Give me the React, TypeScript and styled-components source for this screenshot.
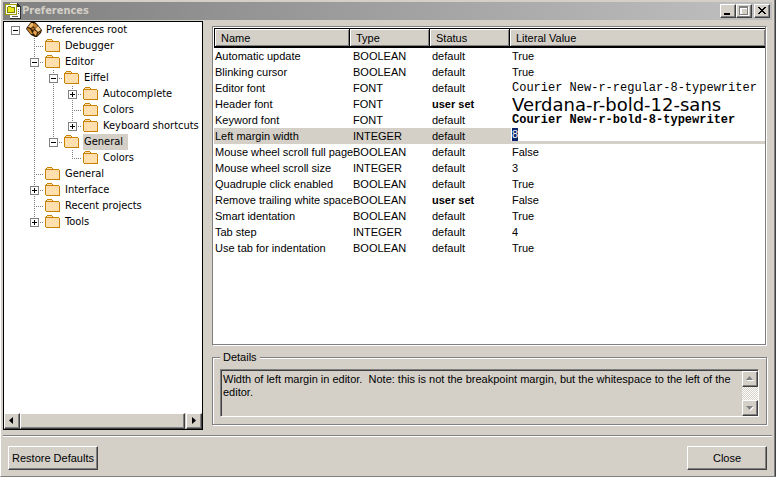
import React, { useState } from "react";
import styled, { createGlobalStyle, css } from "styled-components";

const face = "#d4d0c8";
const shade = "#808080";
const dark = "#404040";
const sans = `"Liberation Sans", Arial, sans-serif`;
const tahoma = `"DejaVu Sans Condensed", "DejaVu Sans", sans-serif`;
const mono = `"Liberation Mono", monospace`;

const GlobalStyle = createGlobalStyle`
  *, *::before, *::after { box-sizing: border-box; }
  body { margin: 0; background: ${face}; }
  button, input, textarea { font: inherit; color: inherit; margin: 0; border-radius: 0; }
`;

const raised = css`
  background: ${face};
  border: 1px solid;
  border-color: #fff ${dark} ${dark} #fff;
  box-shadow: inset -1px -1px ${shade};
`;

const Window = styled.div`
  display: flex;
  flex-direction: column;
  min-height: 100vh;
  padding: 2px 3px 0 2px;
  background: ${face};
  border-left: 1px solid #fff;
  border-right: 1px solid ${dark};
  border-bottom: 1px solid ${shade};
  box-shadow: inset -1px 0 ${shade};
  font: 11px/16px ${sans};
  color: #000;
`;

const TitleBar = styled.header`
  display: flex;
  align-items: center;
  height: 18px;
  padding: 0 2px;
  background: linear-gradient(90deg, #808080, #c0c0c0);
`;

const Title = styled.h1`
  flex: 1;
  margin: 0 0 0 1px;
  color: ${face};
  font: bold 11px/16px ${tahoma};
`;

const CaptionButton = styled.button<{ $spaced?: boolean }>`
  ${raised}
  display: flex;
  width: 16px;
  height: 14px;
  padding: 0;
  margin-left: ${(p) => (p.$spaced ? 2 : 0)}px;
`;

const Body = styled.main`
  display: flex;
  flex: 1;
  gap: 9px;
  margin-top: 1px;
  padding-right: 5px;
`;

const TreePanel = styled.nav`
  display: flex;
  flex-direction: column;
  flex: 0 0 200px;
  min-width: 0;
  background: #fff;
  border: 1px solid #000;
`;

const Tree = styled.ul`
  flex: 1;
  margin: 0;
  padding: 0 0 0 2px;
  list-style: none;
  font: 11px/16px ${tahoma};
`;

const TreeRow = styled.li`
  display: flex;
  height: 16px;
`;

type RailKind = "blank" | "line" | "tee" | "end" | "root";

const dotsY = `repeating-linear-gradient(180deg, ${shade} 0 1px, transparent 1px 2px)`;
const dotsX = `repeating-linear-gradient(90deg, ${shade} 0 1px, transparent 1px 2px)`;

const Rail = styled.span<{ $kind: RailKind }>`
  display: grid;
  place-items: start;
  flex: none;
  width: 19px;
  height: 16px;
  padding: 4px 0 0 5px;
  background-repeat: no-repeat;
  background-image: ${(p) =>
    ({
      blank: "none",
      root: "none",
      line: dotsY,
      tee: `${dotsY}, ${dotsX}`,
      end: `${dotsY}, ${dotsX}`,
    })[p.$kind]};
  background-position: 9px 0, 9px 8px;
  background-size: ${(p) => (p.$kind === "end" ? "1px 9px, 10px 1px" : "1px 16px, 10px 1px")};
`;

const Expander = styled.button`
  display: flex;
  width: 9px;
  height: 9px;
  padding: 0;
  background: #fff;
  border: 1px solid ${shade};
`;

const NodeIcon = styled.span`
  display: flex;
  flex: none;
  width: 20px;
  padding-left: 1px;
`;

const NodeLabel = styled.span<{ $selected: boolean }>`
  padding: 0 5px 0 1px;
  background: ${(p) => (p.$selected ? face : "transparent")};
  white-space: nowrap;
  cursor: default;
`;

const HorizontalScroll = styled.div`
  display: flex;
  height: 16px;
  background: ${face};
`;

const ScrollButton = styled.button`
  ${raised}
  display: flex;
  align-items: center;
  justify-content: center;
  flex: none;
  width: 16px;
  height: 16px;
  padding: 0;
`;

const Thumb = styled.div`
  ${raised}
  flex: 1;
  margin-right: 1px;
`;

const Side = styled.section`
  display: flex;
  flex: 1;
  flex-direction: column;
  min-width: 0;
  padding: 5px 0;
`;

const GridFrame = styled.div`
  flex: 1;
  background: #fff;
  border: 1px solid;
  border-color: ${shade} #fff #fff ${shade};
  padding: 1px 1px 0;
  box-shadow: inset -1px -1px ${shade};
`;

const Grid = styled.table`
  width: 100%;
  table-layout: fixed;
  border-collapse: separate;
  border-spacing: 0;
`;

const HeadCell = styled.th<{ $width?: number }>`
  width: ${(p) => (p.$width ? `${p.$width}px` : "auto")};
  height: 20px;
  padding: 0 0 0 6px;
  background: ${face};
  border: 1px solid #000;
  border-width: 1px 1px 2px 0;
  box-shadow: inset 1px 1px #fff, inset -1px -1px ${shade};
  text-align: left;
  font-weight: normal;
  &:first-child { border-left-width: 1px; }
  &:last-child { border-right-width: 0; }
`;

const Row = styled.tr<{ $selected: boolean }>`
  height: 16px;
  background: ${(p) => (p.$selected ? face : "#fff")};
`;

type ValueFont = "normal" | "mono" | "monoBold" | "large";

const Cell = styled.td<{ $bold?: boolean; $face?: ValueFont; $inset?: number }>`
  height: 16px;
  padding: 0 0 0 ${(p) => p.$inset ?? 2}px;
  white-space: nowrap;
  line-height: 16px;
  font-weight: ${(p) => (p.$bold ? "bold" : "normal")};
  ${(p) => p.$face === "mono" && css`font: 12px/16px ${mono};`}
  ${(p) => p.$face === "monoBold" && css`font: bold 12px/16px ${mono};`}
  ${(p) =>
    p.$face === "large" &&
    css`
      padding-top: 2px;
      font: 18px/14px "DejaVu Sans", sans-serif;
    `}
`;

const ValueInput = styled.input`
  display: block;
  width: 100%;
  height: 13px;
  margin-bottom: 3px;
  padding: 0 0 0 1px;
  border: 0;
  outline: 0;
  line-height: 13px;
  background: linear-gradient(90deg, #fff 1px, #0a246a 1px 7px, #fff 7px);
  color: #fff;
`;

const Details = styled.fieldset`
  margin: 5px 0 0;
  padding: 5px 7px 7px;
  min-width: 0;
  border: 1px solid ${shade};
  box-shadow: 1px 1px #fff, inset 1px 1px #fff;
`;

const Legend = styled.legend`
  padding: 0 3px;
  background: ${face};
  line-height: 13px;
`;

const DetailsBox = styled.div`
  display: flex;
  height: 48px;
  border: 1px solid;
  border-color: ${shade} #fff #fff ${shade};
  box-shadow: inset 1px 1px ${dark};
  padding: 1px 0 0 1px;
`;

const DetailsText = styled.textarea`
  flex: 1;
  min-width: 0;
  padding: 2px 0 0 1px;
  border: 0;
  outline: 0;
  resize: none;
  overflow: hidden;
  background: transparent;
  line-height: 13px;
`;

const VerticalScroll = styled.div`
  display: flex;
  flex-direction: column;
  justify-content: space-between;
  width: 16px;
  background: repeating-conic-gradient(#fff 0 25%, ${face} 0 50%) 0 0 / 2px 2px;
`;

const Footer = styled.footer`
  display: flex;
  justify-content: space-between;
  margin-top: 5px;
  padding: 10px 5px 6px;
  border-top: 1px solid ${shade};
  box-shadow: inset 0 1px #fff;
`;

const PushButton = styled.button<{ $width: number }>`
  ${raised}
  width: ${(p) => p.$width}px;
  height: 24px;
  padding: 0;
  white-space: nowrap;
`;

const FolderIcon = () => (
  <svg width="16" height="16" shapeRendering="crispEdges" aria-hidden="true">
    <path d="M2 1h5v1h1v1h6v11H1V3h1z" fill="#ffe0b0" />
    <path d="M3 5h1v1H3zM6 4h1v1H6zM9 6h1v1H9zM12 5h1v1h-1zM4 8h1v1H4zM7 9h1v1H7zM11 8h1v1h-1zM3 11h1v1H3zM9 11h1v1H9zM12 12h1v1h-1z" fill="#ffc8a8" />
    <path d="M4 6h1v1H4zM7 6h1v1H7zM10 9h1v1h-1zM6 11h1v1H6zM12 10h1v1h-1zM11 4h1v1h-1z" fill="#ffec90" />
    <path d="M2 1h5v1H2zM1 2h1v1H1zM7 2h1v1H7zM0 3h1v10H0zM1 3h13v1H1zM14 4h1v9h-1zM1 13h14v1H1z" fill="#c88200" />
  </svg>
);

const RootIcon = () => (
  <svg width="17" height="16" viewBox="0 0 17 16" aria-hidden="true">
    <path d="M5 0h4l3 3 4 5-1 3-4 4H9l-4-2-5-6 1-2z" fill="#2a1800" />
    <path d="M5 1h2l1 2-3 3-3-1z" fill="#f0b868" />
    <path d="m8 1 3 2v2L9 6 7 4z" fill="#c88430" />
    <path d="m12 4 3 4-3 2-3-3z" fill="#f8cc90" />
    <path d="m1 6 3 1 3 5H5L1 7z" fill="#d08830" />
    <path d="m8 8 3 2-1 4-3-3z" fill="#e8a450" />
    <path d="m5 7 2-2 2 2-2 1z" fill="#a86820" />
    <path d="m12 11 3-2-4 5z" fill="#c07820" />
  </svg>
);

const WindowIcon = () => (
  <svg width="16" height="16" shapeRendering="crispEdges" aria-hidden="true">
    <path d="M5 0h8l2 3v12H5z" fill="#fff" />
    <path d="M12 0h1v1h1v1h1v1h1v13H5v-1h10V4h-3z" fill="#303030" />
    <path d="M13 6h1v1h-1zM13 8h1v1h-1zM13 10h1v1h-1zM7 13h6v1H7z" fill="#606060" />
    <path d="M0 1h12v11H0z" fill="#fff" />
    <path d="M0 1h12v1H0zM0 2h1v10H0zM11 2h1v10h-1zM0 11h12v1H0z" fill="#a0a000" />
    <path d="M2 4h1V3h3v1h4v6H2z" fill="#808000" />
    <path d="M3 4h3v1h3v4H3z" fill="#e8e820" />
  </svg>
);

const arrows = {
  left: "M5 0v7L1 3.5z",
  right: "M2 0v7l4-3.5z",
  up: "M0 5h7L3.5 1z",
  down: "M0 2h7L3.5 6z",
};

const Arrow = ({ dir, off }: { dir: keyof typeof arrows; off?: boolean }) => (
  <svg width="8" height="8" aria-hidden="true">
    {off && <path d={arrows[dir]} fill="#fff" transform="translate(1 1)" />}
    <path d={arrows[dir]} fill={off ? shade : "#000"} />
  </svg>
);

interface TreeNode {
  label: string;
  rails: RailKind[];
  box?: "+" | "-";
  id: string;
}

const nodes: TreeNode[] = [
  { id: "root", label: "Preferences root", rails: ["root"], box: "-" },
  { id: "debugger", label: "Debugger", rails: ["blank", "tee"] },
  { id: "editor", label: "Editor", rails: ["blank", "tee"], box: "-" },
  { id: "eiffel", label: "Eiffel", rails: ["blank", "line", "tee"], box: "-" },
  { id: "auto", label: "Autocomplete", rails: ["blank", "line", "line", "tee"], box: "+" },
  { id: "colors", label: "Colors", rails: ["blank", "line", "line", "tee"] },
  { id: "keys", label: "Keyboard shortcuts", rails: ["blank", "line", "line", "end"], box: "+" },
  { id: "editor-general", label: "General", rails: ["blank", "line", "end"], box: "-" },
  { id: "general-colors", label: "Colors", rails: ["blank", "line", "blank", "end"] },
  { id: "general", label: "General", rails: ["blank", "tee"] },
  { id: "interface", label: "Interface", rails: ["blank", "tee"], box: "+" },
  { id: "recent", label: "Recent projects", rails: ["blank", "tee"] },
  { id: "tools", label: "Tools", rails: ["blank", "end"], box: "+" },
];

interface Preference {
  name: string;
  type: string;
  value: string;
  userSet?: boolean;
  face?: ValueFont;
}

const preferences: Preference[] = [
  { name: "Automatic update", type: "BOOLEAN", value: "True" },
  { name: "Blinking cursor", type: "BOOLEAN", value: "True" },
  { name: "Editor font", type: "FONT", value: "Courier New-r-regular-8-typewriter", face: "mono" },
  { name: "Header font", type: "FONT", value: "Verdana-r-bold-12-sans", userSet: true, face: "large" },
  { name: "Keyword font", type: "FONT", value: "Courier New-r-bold-8-typewriter", face: "monoBold" },
  { name: "Left margin width", type: "INTEGER", value: "8" },
  { name: "Mouse wheel scroll full page", type: "BOOLEAN", value: "False" },
  { name: "Mouse wheel scroll size", type: "INTEGER", value: "3" },
  { name: "Quadruple click enabled", type: "BOOLEAN", value: "True" },
  { name: "Remove trailing white space", type: "BOOLEAN", value: "False", userSet: true },
  { name: "Smart identation", type: "BOOLEAN", value: "True" },
  { name: "Tab step", type: "INTEGER", value: "4" },
  { name: "Use tab for indentation", type: "BOOLEAN", value: "True" },
];

const editing = "Left margin width";

export default function App() {
  const [selected, setSelected] = useState("editor-general");
  const [margin, setMargin] = useState("8");

  return (
    <>
      <GlobalStyle />
      <Window>
        <TitleBar>
          <WindowIcon />
          <Title>Preferences</Title>
          <CaptionButton aria-label="Minimize">
            <svg width="14" height="12"><path d="M3 8h6v2H3z" /></svg>
          </CaptionButton>
          <CaptionButton aria-label="Maximize" disabled>
            <svg width="14" height="12" shapeRendering="crispEdges">
              <path d="M3 2h9v9H3zM5 4v5h5V4z" fill="#fff" fillRule="evenodd" />
              <path d="M2 1h9v9H2zM3 3v6h7V3z" fill={shade} fillRule="evenodd" />
            </svg>
          </CaptionButton>
          <CaptionButton aria-label="Close window" $spaced>
            <svg width="14" height="12" shapeRendering="crispEdges">
              <path d="M3 2h2v1h1v1h2V3h1V2h2v1h-1v1H9v1H8v1h1v1h1v1h1v1H9V8H8V7H6v1H5v1H3V8h1V7h1V6h1V5H5V4H4V3H3z" />
            </svg>
          </CaptionButton>
        </TitleBar>

        <Body>
          <TreePanel aria-label="Preference sections">
            <Tree>
              {nodes.map((n) => (
                <TreeRow key={n.id}>
                  {n.rails.map((kind, i) => (
                    <Rail key={i} $kind={kind}>
                      {n.box && i === n.rails.length - 1 && (
                        <Expander aria-label={`${n.box === "+" ? "Expand" : "Collapse"} ${n.label}`}>
                          <svg width="7" height="7" shapeRendering="crispEdges">
                            <path d={n.box === "+" ? "M1 3h5v1H1zM3 1h1v5H3z" : "M1 3h5v1H1z"} />
                          </svg>
                        </Expander>
                      )}
                    </Rail>
                  ))}
                  <NodeIcon>{n.id === "root" ? <RootIcon /> : <FolderIcon />}</NodeIcon>
                  <NodeLabel $selected={n.id === selected} onClick={() => setSelected(n.id)}>
                    {n.label}
                  </NodeLabel>
                </TreeRow>
              ))}
            </Tree>
            <HorizontalScroll>
              <ScrollButton aria-label="Scroll left"><Arrow dir="left" /></ScrollButton>
              <Thumb />
              <ScrollButton aria-label="Scroll right"><Arrow dir="right" /></ScrollButton>
            </HorizontalScroll>
          </TreePanel>

          <Side>
            <GridFrame>
              <Grid>
                <thead>
                  <tr>
                    <HeadCell $width={136}>Name</HeadCell>
                    <HeadCell $width={80}>Type</HeadCell>
                    <HeadCell $width={80}>Status</HeadCell>
                    <HeadCell>Literal Value</HeadCell>
                  </tr>
                </thead>
                <tbody>
                  {preferences.map((p) => (
                    <Row key={p.name} $selected={p.name === editing}>
                      <Cell $inset={1}>{p.name}</Cell>
                      <Cell $inset={3}>{p.type}</Cell>
                      <Cell $bold={p.userSet}>{p.userSet ? "user set" : "default"}</Cell>
                      {p.name === editing ? (
                        <Cell $inset={1}>
                          <ValueInput
                            aria-label={p.name}
                            value={margin}
                            onChange={(e) => setMargin(e.target.value)}
                          />
                        </Cell>
                      ) : (
                        <Cell $face={p.face}>{p.value}</Cell>
                      )}
                    </Row>
                  ))}
                </tbody>
              </Grid>
            </GridFrame>

            <Details>
              <Legend>Details</Legend>
              <DetailsBox>
                <DetailsText
                  readOnly
                  aria-label="Details"
                  value="Width of left margin in editor.  Note: this is not the breakpoint margin, but the whitespace to the left of the editor."
                />
                <VerticalScroll>
                  <ScrollButton aria-label="Scroll up" disabled><Arrow dir="up" off /></ScrollButton>
                  <ScrollButton aria-label="Scroll down" disabled><Arrow dir="down" off /></ScrollButton>
                </VerticalScroll>
              </DetailsBox>
            </Details>
          </Side>
        </Body>

        <Footer>
          <PushButton $width={90}>Restore Defaults</PushButton>
          <PushButton $width={80}>Close</PushButton>
        </Footer>
      </Window>
    </>
  );
}
